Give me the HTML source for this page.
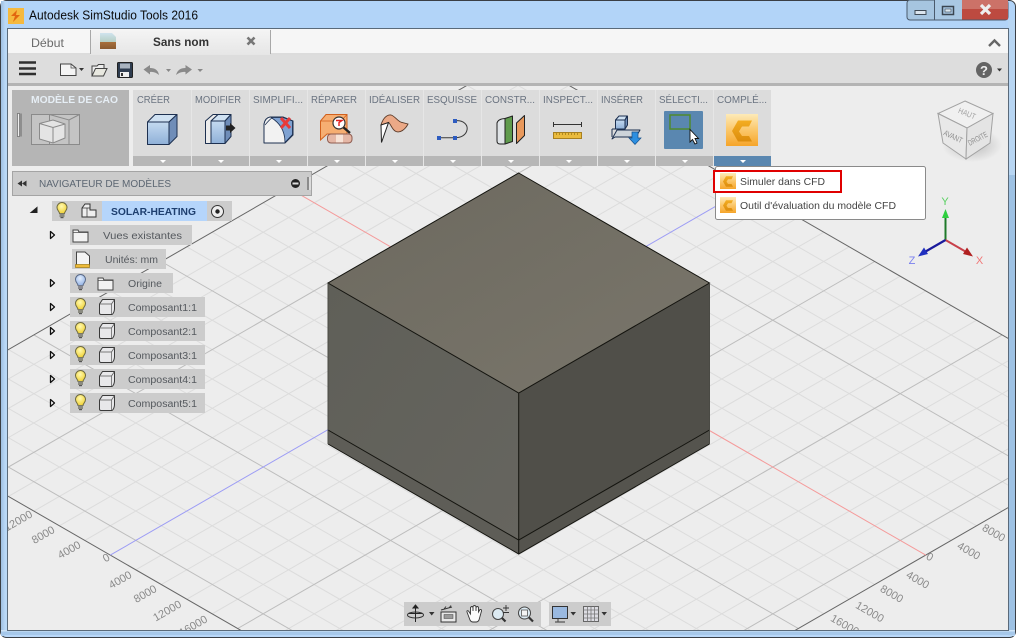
<!DOCTYPE html>
<html><head><meta charset="utf-8"><title>Autodesk SimStudio Tools 2016</title>
<style>
html,body{margin:0;padding:0;background:#fff;width:1016px;height:638px;overflow:hidden;position:relative}
svg{display:block;font-family:"Liberation Sans",sans-serif}
.l{position:absolute;left:0;top:0}
#vp{position:absolute;left:8px;top:86px;width:1000px;height:544px;overflow:hidden}
.rl{font-size:10px;fill:#6a7380}
.tr{font-size:10px;fill:#55595e}
.ax{font-size:11px;fill:#8a8a8a}
</style></head><body>
<svg class="l" width="1016" height="638" viewBox="0 0 1016 638" xmlns="http://www.w3.org/2000/svg">
<defs>
<linearGradient id="glass" x1="0" y1="0" x2="0" y2="1"><stop offset="0" stop-color="#b2d4f8"/><stop offset="1" stop-color="#b9d8f9"/></linearGradient>
<linearGradient id="glassL" x1="0" y1="0" x2="1" y2="0"><stop offset="0" stop-color="#9fc0e2"/><stop offset=".6" stop-color="#b9d8f6"/><stop offset="1" stop-color="#b9d8f6"/></linearGradient>
<linearGradient id="top" x1="0" y1="0" x2="1" y2="1"><stop offset="0" stop-color="#6c695f"/><stop offset="1" stop-color="#7a766b"/></linearGradient>
<linearGradient id="lf" x1="0" y1="0" x2="1" y2="1"><stop offset="0" stop-color="#5f5f58"/><stop offset="1" stop-color="#66655f"/></linearGradient>
<linearGradient id="bl" x1="0" y1="0" x2="0" y2="1"><stop offset="0" stop-color="#c4daf0"/><stop offset="1" stop-color="#8fb0d8"/></linearGradient>
<linearGradient id="or" x1="0" y1="0" x2="0" y2="1"><stop offset="0" stop-color="#fdeab8"/><stop offset=".5" stop-color="#fbc76a"/><stop offset="1" stop-color="#f6a52a"/></linearGradient>
<linearGradient id="cc" x1="0" y1="0" x2="0" y2="1"><stop offset="0" stop-color="#f3ad22"/><stop offset="1" stop-color="#dc8c0c"/></linearGradient>
<linearGradient id="tab" x1="0" y1="0" x2="0" y2="1"><stop offset="0" stop-color="#f4f4f4"/><stop offset="1" stop-color="#e6e6e6"/></linearGradient>
<linearGradient id="tic" x1="0" y1="0" x2="0" y2="1"><stop offset="0" stop-color="#cfe3ee"/><stop offset=".55" stop-color="#b6cfc4"/><stop offset=".56" stop-color="#a8703c"/><stop offset="1" stop-color="#8a5a30"/></linearGradient>
<radialGradient id="bulb" cx=".45" cy=".35" r=".7"><stop offset="0" stop-color="#fff9b0"/><stop offset="1" stop-color="#f0cf2c"/></radialGradient>
<radialGradient id="bulbb" cx=".45" cy=".35" r=".7"><stop offset="0" stop-color="#e4eefc"/><stop offset="1" stop-color="#8fb0e4"/></radialGradient>
<radialGradient id="sh" cx=".5" cy=".5" r=".5"><stop offset="0" stop-color="#aaa" stop-opacity=".75"/><stop offset="1" stop-color="#aaa" stop-opacity="0"/></radialGradient>

<g id="bulbY"><path d="M-2.5 3.5C-2.5 1.5 -5 .5 -5 -2.5A5 5 0 0 1 5 -2.5C5 .5 2.5 1.5 2.5 3.5Z" fill="url(#bulb)" stroke="#6e6a40"/><rect x="-2.5" y="3.5" width="5" height="3.5" fill="#8a8a80"/><rect x="-1.5" y="7" width="3" height="1.2" fill="#555"/></g>
<g id="bulbB"><path d="M-2.5 3.5C-2.5 1.5 -5 .5 -5 -2.5A5 5 0 0 1 5 -2.5C5 .5 2.5 1.5 2.5 3.5Z" fill="url(#bulbb)" stroke="#5a6a88"/><rect x="-2.5" y="3.5" width="5" height="3.5" fill="#8a8a90"/><rect x="-1.5" y="7" width="3" height="1.2" fill="#555"/></g>
<g id="comp"><path d="M-7.5 -3L-4.5 -7.5H7.5V2Q7.2 6 5 7.5H-6Q-7.5 7.5 -7.5 6Z" fill="#e8e8ea" stroke="#3a3a3a" stroke-linejoin="round"/><path d="M-7.5 -3H4.5V7M4.5 -3L7.5 -7.5" fill="none" stroke="#555" stroke-width=".7"/></g>
<g id="fold"><path d="M-7.5 -6H-2.500L-1.500 -4H7.5V6H-7.5Z" fill="#f2f2f2" stroke="#444"/><path d="M-7.5 -3.5H7.5" stroke="#444" stroke-width=".7"/></g>
<path id="exp" d="M-1.5 -3.5L2.5 0L-1.5 3.5Z" fill="#fff" stroke="#111" stroke-width="1.3" stroke-linejoin="round"/>
<g id="cfd"><rect x="0" y="0" width="16" height="16" fill="url(#or)"/><path d="M6 3.300H13L11.500 6.200H8L6.500 8.700L8 11H11.500L13 13.800H6L3 8.500Z" fill="url(#cc)"/></g>
</defs>

<!-- window frame -->
<rect width="1016" height="638" fill="#fff"/>
<rect x=".5" y=".5" width="1015" height="637" rx="6" fill="url(#glass)" stroke="#3a3f45"/>
<rect x="1" y="1" width="7" height="635" fill="url(#glassL)"/>
<rect x="1008" y="20" width="7" height="616" fill="#b8d6f3"/>
<rect x="1009" y="175" width="6" height="460" fill="#9ec2e4"/>
<rect x="1" y="631" width="1014" height="4" fill="#a6c8ea"/>
<rect x="1" y="630" width="1014" height="1.5" fill="#cfe4f7"/>
<rect x="7.5" y="28.5" width="1001" height="602" fill="#ededed" stroke="#5a6a7a"/>

<!-- title -->
<rect x="8" y="8" width="16" height="16" fill="#f5b93e"/>
<path d="M17 10L11 16H15L13 22L20 15H16Z" fill="#e2660f"/>
<text x="29" y="19.5" font-size="12.5" fill="#0b0b0b" textLength="169" lengthAdjust="spacingAndGlyphs">Autodesk SimStudio Tools 2016</text>

<!-- caption buttons -->
<rect x="907" y="0" width="101" height="20" rx="3" fill="#a6c5e0" stroke="#4a5a6c"/>
<rect x="934" y="0" width="28" height="19.5" fill="#a9c8e3"/><path d="M934.5 0V20" stroke="#4a5a6c"/>
<rect x="962" y="0" width="46" height="19.5" fill="#bd4a40"/>
<rect x="962" y="0" width="46" height="9" fill="#cc7268"/>
<rect x="915" y="10.5" width="11" height="4" fill="#dbe5ee" stroke="#3f4a55"/>
<rect x="942.5" y="6.5" width="11" height="8" fill="none" stroke="#3a4550" stroke-width="1.5"/><rect x="945" y="9" width="6" height="3" fill="#dce8f0" stroke="#3a4550" stroke-width=".6"/>
<path d="M981 5L990 14M990 5L981 14" stroke="#eee" stroke-width="3.2"/>

<!-- tabs -->
<rect x="8" y="29" width="1000" height="26" fill="#f6f6f6"/>
<rect x="8" y="53" width="1000" height="2" fill="#dcdcdc"/>
<rect x="90" y="30" width="180" height="25" fill="url(#tab)"/>
<path d="M90.5 54V30M270.5 54V30" stroke="#a8a8a8"/>
<text x="31" y="47" font-size="12" fill="#6a6a6a" textLength="33" lengthAdjust="spacingAndGlyphs">Début</text>
<path d="M100 33H112L116 37V49H100Z" fill="url(#tic)"/>
<text x="153" y="46" font-size="12" font-weight="bold" fill="#333" textLength="56" lengthAdjust="spacingAndGlyphs">Sans nom</text>
<path d="M247.5 37.5L254.5 44.5M254.5 37.5L247.5 44.5" stroke="#777" stroke-width="2.6"/>
<path d="M989 46L994.5 40.5L1000 46" fill="none" stroke="#666" stroke-width="2.4"/>

<!-- toolbar -->
<rect x="8" y="55" width="1000" height="28" fill="#dddddd"/>
<rect x="8" y="83" width="1000" height="3" fill="#b4b4b4"/>
<path d="M19 62.5H36M19 68.5H36M19 74H36" stroke="#2f2f2f" stroke-width="2.6"/>
<path d="M60.5 64H71L76 68V75.5H60.5Z" fill="#f4f4f4" stroke="#444"/><path d="M71 64V68H76" fill="none" stroke="#444" stroke-width=".7"/>
<path d="M79 68H84L81.5 71Z" fill="#333"/>
<path d="M92 76V66H97L98.5 64.5H104V68" fill="#eee" stroke="#444"/><path d="M92 76L95.5 68.5H107L103.5 76Z" fill="#e8e8e0" stroke="#444"/>
<rect x="117.5" y="62.5" width="15" height="15" rx="1" fill="#2f3d50" stroke="#222"/><rect x="120" y="63.5" width="10" height="5" fill="#aab4c0"/><rect x="120" y="72" width="9" height="5" fill="#eee"/><rect x="121" y="73" width="2" height="3" fill="#333"/>
<path d="M143.5 69.5L150 65V68C155 68 158 70 159 75C156 72.5 153 71.5 150 72V74.5Z" fill="#8a8a8a"/>
<path d="M166 69H171L168.5 72Z" fill="#888"/>
<path d="M192 69.5L185.5 65V68C180.5 68 177.5 70 176 75C179 72.5 182.5 71.5 185.5 72V74.5Z" fill="#8a8a8a"/>
<path d="M197.5 69H203L200 72Z" fill="#888"/>
<circle cx="984" cy="70" r="8" fill="#646464"/><text x="984" y="75" font-size="13" font-weight="bold" fill="#eee" text-anchor="middle">?</text>
<path d="M997 68.5H1002L999.5 71.5Z" fill="#333"/>
</svg>

<!-- viewport -->
<div id="vp">
<svg width="1000" height="544" viewBox="8 86 1000 544" xmlns="http://www.w3.org/2000/svg">
<rect x="8" y="86" width="1000" height="544" fill="#ededed"/>
<path fill="none" stroke="#dcdcdc" d="M344 631l-412 -237.400M394.800 631l-437.400 -252M445.800 631l-462.900 -266.700M496.800 631l-488.400 -281.400M598.800 631l-539.400 -310.800M649.600 631l-564.800 -325.400M700.600 631l-590.300 -340.100M751.600 631l-615.800 -354.800M823.800 613.800l-637 -367M849.200 599.200l-637 -367M874.700 584.500l-637 -367M900.200 569.800l-637 -367M951.200 540.400l-637 -367M976.600 525.800l-637 -367M1002.100 511.100l-637 -367M1027.600 496.400l-637 -367M1078.600 467l-637 -367M1104 452.400l-637 -367M1129.500 437.700l-637 -367
M692 631l412 -237.400M641.200 631l437.400 -252M590.200 631l462.900 -266.700M539.200 631l488.400 -281.400M437.200 631l539.400 -310.800M386.400 631l564.800 -325.400M335.400 631l590.300 -340.100M284.400 631l615.800 -354.800M212.200 613.800l637 -367M186.800 599.200l637 -367M161.300 584.500l637 -367M135.800 569.800l637 -367M84.800 540.400l637 -367M59.400 525.800l637 -367M33.900 511.100l637 -367M8.400 496.400l637 -367M-42.600 467l637 -367M-68 452.400l637 -367M-93.500 437.700l637 -367"/>
<path fill="none" stroke="#bdbdbd" d="M293 631l-386.500 -222.700M547.800 631l-513.900 -296.100M798.300 628.500l-637 -367M1053.100 481.700l-637 -367M743 631l386.500 -222.700M488.200 631l513.900 -296.100M237.700 628.500l637 -367M-17.100 481.700l637 -367"/>
<path fill="none" stroke="#666" d="M242 631l-361 -208M794 631l361 -208M1155 423l-637 -367M-119 423l637 -367"/>
<path d="M925.700 555.100l-637 -367" stroke="#f59a9a" fill="none"/>
<path d="M110.300 555.100l637 -367" stroke="#9c9cf5" fill="none"/>
<g class="ax">
<text transform="translate(20,524) rotate(-30)" text-anchor="middle">12000</text>
<text transform="translate(45,538) rotate(-30)" text-anchor="middle">8000</text>
<text transform="translate(71,553) rotate(-30)" text-anchor="middle">4000</text>
<text transform="translate(108,561) rotate(-30)" text-anchor="middle">0</text>
<text transform="translate(122,583) rotate(-30)" text-anchor="middle">4000</text>
<text transform="translate(147,597) rotate(-30)" text-anchor="middle">8000</text>
<text transform="translate(169,614) rotate(-30)" text-anchor="middle">12000</text>
<text transform="translate(195,629) rotate(-30)" text-anchor="middle">16000</text>
<text transform="translate(992,536) rotate(30)" text-anchor="middle">8000</text>
<text transform="translate(967,554) rotate(30)" text-anchor="middle">4000</text>
<text transform="translate(928,560) rotate(30)" text-anchor="middle">0</text>
<text transform="translate(916,583) rotate(30)" text-anchor="middle">4000</text>
<text transform="translate(890,597) rotate(30)" text-anchor="middle">8000</text>
<text transform="translate(868,615) rotate(30)" text-anchor="middle">12000</text>
<text transform="translate(843,628) rotate(30)" text-anchor="middle">16000</text>
</g>
</svg>
</div>

<svg class="l" width="1016" height="638" viewBox="0 0 1016 638" xmlns="http://www.w3.org/2000/svg">
<!-- model -->
<path d="M518.7 173L709.5 283L518.7 393L328 283Z" fill="url(#top)"/>
<path d="M328 283L518.7 393V540L328 430Z" fill="url(#lf)"/>
<path d="M518.7 393L709.5 283V430L518.7 540Z" fill="#504f49"/>
<path d="M328 430L518.7 540V554L328 444Z" fill="#5e5d57"/>
<path d="M518.7 540L709.5 430V444L518.7 554Z" fill="#55544e"/>
<path d="M518.7 173L709.5 283L518.7 393L328 283Z M518.7 393V554 M328 430L518.7 540L709.5 430 M328 444L518.7 554L709.5 444" fill="none" stroke="#14140f" stroke-width="1"/>
<path d="M328 283V444M709.5 283V444" stroke="#4a4a44" stroke-width="1"/>

<!-- ribbon -->
<rect x="12" y="90" width="117" height="76" fill="#b5b5b5"/>
<text x="31" y="103" font-size="10" font-weight="bold" fill="#e6eef5" textLength="87" lengthAdjust="spacingAndGlyphs">MODÈLE DE CAO</text>
<rect x="17.5" y="113.5" width="2" height="23" fill="#eee" stroke="#666" stroke-width=".7"/><rect x="20.5" y="113.5" width="1" height="23" fill="#666"/>
<g fill="none" stroke="#8a8a8a">
<rect x="31.5" y="114.5" width="48" height="30" fill="#c4c4c4"/>
<path d="M49.5 114.5V144.5M49.5 114.5L69 120L79.5 114.5M69 120V144.5"/>
<path d="M39.5 123.5L53 120L65 124V138L53 143L39.5 139Z" fill="#e4e4e4"/>
<path d="M39.5 123.5L53 127.5L65 124M53 127.5V143"/>
</g>

<rect x="133" y="90" width="638" height="66" fill="#dcdcdc"/>
<rect x="133" y="156" width="638" height="10" fill="#b7b7b7"/>
<rect x="714" y="156" width="57" height="10" fill="#5a87b0"/>
<path d="M191.5 90V166M249.5 90V166M307.5 90V166M365.5 90V166M423.5 90V166M481.5 90V166M539.5 90V166M597.5 90V166M655.5 90V166M713.5 90V166" stroke="#e6e6e6"/>
<path fill="#fff" d="M160 160h6l-3 3zM218 160h6l-3 3zM276 160h6l-3 3zM334 160h6l-3 3zM392 160h6l-3 3zM450 160h6l-3 3zM508 160h6l-3 3zM566 160h6l-3 3zM624 160h6l-3 3zM682 160h6l-3 3zM740 160h6l-3 3z"/>
<g class="rl">
<text x="137" y="103" textLength="33" lengthAdjust="spacingAndGlyphs">CRÉER</text>
<text x="195" y="103" textLength="46" lengthAdjust="spacingAndGlyphs">MODIFIER</text>
<text x="253" y="103" textLength="50" lengthAdjust="spacingAndGlyphs">SIMPLIFI...</text>
<text x="311" y="103" textLength="46" lengthAdjust="spacingAndGlyphs">RÉPARER</text>
<text x="369" y="103" textLength="51" lengthAdjust="spacingAndGlyphs">IDÉALISER</text>
<text x="427" y="103" textLength="50" lengthAdjust="spacingAndGlyphs">ESQUISSE</text>
<text x="485" y="103" textLength="50" lengthAdjust="spacingAndGlyphs">CONSTR...</text>
<text x="543" y="103" textLength="50" lengthAdjust="spacingAndGlyphs">INSPECT...</text>
<text x="601" y="103" textLength="42" lengthAdjust="spacingAndGlyphs">INSÉRER</text>
<text x="659" y="103" textLength="49" lengthAdjust="spacingAndGlyphs">SÉLECTI...</text>
<text x="717" y="103" textLength="50" lengthAdjust="spacingAndGlyphs">COMPLÉ...</text>
</g>

<!-- créer -->
<g stroke="#1d3050" stroke-linejoin="round">
<path d="M147.5 122L155 114.5H177L169 122Z" fill="#cfe1f2"/>
<path d="M169 122L177 114.5V136.5L169 144.5Z" fill="#6f8db8"/>
<rect x="147.5" y="122" width="21.5" height="22.5" fill="url(#bl)"/>
<!-- modifier -->
<path d="M205.5 121L213 114.5H218L211 121V143.5H205.5Z" fill="#ececec"/>
<path d="M211 121L218 114.5H231L225 121Z" fill="#cfe1f2"/>
<path d="M225 121L231 114.5V136.5L225 143.5Z" fill="#6f8db8"/>
<rect x="211" y="121" width="14" height="22.5" fill="url(#bl)"/>
</g>
<path d="M226 125.5H230V123L235.5 128L230 133V130.5H226Z" fill="#222"/>
<!-- simplifier -->
<g stroke-linejoin="round">
<path d="M270 117H283L293 121V135L285 143H264V124Q265 118 270 117Z" fill="#f2f2f2" stroke="#1d3050"/>
<path d="M271 117.5H283L292.5 121V134.5L285 142.5Q285 126 271 117.5Z" fill="#7fa2d2" stroke="#1d3050" stroke-width=".8"/>
<path d="M281 118L290 128M290 118L281 128" stroke="#e83a3a" stroke-width="3"/>
<path d="M265 125Q270 119 272 118" fill="none" stroke="#1d3050" stroke-width=".7"/>
</g>
<!-- réparer -->
<path d="M320.5 121L326 114.5H347V134H327L320.5 140Z" fill="#f6ae72" stroke="#d2601c"/>
<path d="M320.5 121H341M341 121L347 114.5" fill="none" stroke="#d2601c" stroke-width=".8"/>
<path d="M343 127L350 133" stroke="#222" stroke-width="2.4"/>
<circle cx="339" cy="123" r="6" fill="#fff" stroke="#333" stroke-width="1.2"/>
<path d="M336 120.5H342L339 122.5V126" fill="none" stroke="#e02020" stroke-width="1.4"/>
<rect x="327.5" y="134" width="24.5" height="9" rx="3.5" fill="#e5b7a6" stroke="#8e5c50"/><rect x="336" y="134.5" width="7" height="8" fill="#f7e2d6"/>
<!-- idéaliser -->
<path d="M381 125C383 118 387 114.5 391 115C395 116 398 122 402 122.5L408 124C405 130 400 133 396 131.5C392 130 391 124 388.5 122.5Z" fill="#eba987" stroke="#5a3a28" stroke-width=".9"/>
<path d="M381 125L388.5 122.5L381.5 142.5Z" fill="#fff" stroke="#222"/>
<!-- esquisse -->
<path d="M441 137.7H454M455 120.7C464 120 468 125 467 130C466 135 461 137.7 456 137.7" fill="none" stroke="#3a3a3a" stroke-width="1"/>
<rect x="453" y="119" width="4" height="4" fill="#2e5cc0"/><rect x="437" y="136" width="4" height="4" fill="#2e5cc0"/><rect x="453" y="136" width="4" height="4" fill="#2e5cc0"/>
<!-- constr -->
<g stroke="#222" stroke-linejoin="round">
<path d="M497 123Q498 119 505 118.5V144H500Q497 144 497 141Z" fill="#dfe3e6"/>
<path d="M505 118.5L512.5 116V141.5L505 144Z" fill="#5f9b4d"/>
<path d="M516.5 123L524.5 115.5V135.5L516.5 143.5Z" fill="#e9995c"/>
</g>
<!-- inspect -->
<path d="M553.5 124.5H582M553.5 122V127M581.5 122V127" stroke="#333" fill="none"/>
<rect x="553.5" y="132.5" width="28" height="6" fill="#eabb3e" stroke="#a88020"/>
<path d="M556.5 133V135M559.5 133V135M562.5 133V135M565.5 133V135M568.5 133V135M571.5 133V135M574.5 133V135M577.5 133V135" stroke="#8a6a10" stroke-width=".6"/>
<!-- insérer -->
<g stroke="#1d3050" stroke-linejoin="round">
<path d="M615.5 120L619 116H627L625 120Z" fill="#cfe1f2"/><rect x="615.5" y="120" width="9.5" height="9" fill="url(#bl)"/><path d="M625 120L627.5 116V125L625 129Z" fill="#6f8db8"/>
<path d="M612 129V137M612 129H616" fill="none"/>
<path d="M612 139L617 130H640L636 137H615Z" fill="#cdd4da"/>
</g>
<path d="M632 132H638V138H641L635 144.5L629 138H632Z" fill="#2d8fe0" stroke="#14508c" stroke-width=".7"/>
<!-- selection -->
<rect x="664" y="111" width="39" height="38" rx="1" fill="#5a87b0"/>
<rect x="670" y="115" width="20" height="14" fill="none" stroke="#4f8a2e" stroke-width="1.5"/>
<path d="M690 129.5V142L692.5 139.5L695 144L697 143L695 138.5H698.5Z" fill="#fff" stroke="#111" stroke-width=".9"/>
<!-- complement -->
<rect x="726" y="114" width="32" height="32" fill="url(#or)"/>
<path d="M738 120.5H752L749 126.5H742L739 131.500L742 136H749L752 141.500H738L732 131Z" fill="url(#cc)"/>

<!-- popup -->
<rect x="715.5" y="166.5" width="210" height="53" rx="2" fill="#fff" stroke="#8a8a8a"/>
<rect x="714" y="171" width="127" height="21" fill="#fff" stroke="#e00000" stroke-width="2"/>
<use href="#cfd" x="720" y="173"/>
<use href="#cfd" x="720" y="197"/>
<text x="740" y="185" font-size="10.5" fill="#444" textLength="85" lengthAdjust="spacingAndGlyphs">Simuler dans CFD</text>
<text x="740" y="209" font-size="10.5" fill="#444" textLength="156" lengthAdjust="spacingAndGlyphs">Outil d'évaluation du modèle CFD</text>

<!-- viewcube -->
<ellipse cx="972" cy="145" rx="30" ry="17" fill="url(#sh)"/>
<path d="M965 101L993 113.5L967 128L938 113.5Z" fill="#f0f0f0" stroke="#a2a2a2"/>
<path d="M938 113.5L967 128L966 159L943 143Z" fill="#e8e8e8" stroke="#a2a2a2"/>
<path d="M993 113.5L967 128L966 159L990 143Z" fill="#e4e4e4" stroke="#a2a2a2"/>
<text transform="translate(966,116) rotate(22)" font-size="8" fill="#a0a0a0" text-anchor="middle" textLength="18" lengthAdjust="spacingAndGlyphs">HAUT</text>
<text transform="translate(952,139) rotate(25)" font-size="8" fill="#8f8f8f" text-anchor="middle" textLength="20" lengthAdjust="spacingAndGlyphs">AVANT</text>
<text transform="translate(979,141) rotate(-28)" font-size="8" fill="#8f8f8f" text-anchor="middle" textLength="21" lengthAdjust="spacingAndGlyphs">DROITE</text>

<!-- triad -->
<path d="M945.5 240V214" stroke="#1f7a2a" stroke-width="2"/><path d="M945.5 209L949 218H942Z" fill="#2fd040"/>
<path d="M945.5 240L968 253" stroke="#c8404a" stroke-width="2"/><path d="M973 256.5L963 254L967 247.5Z" fill="#b02020"/>
<path d="M945.5 240L923 253" stroke="#1a1a9c" stroke-width="2.2"/><path d="M918 256.5L928 254L924 247.5Z" fill="#2030c0"/>
<text x="945" y="205" font-size="11" fill="#58d060" text-anchor="middle">Y</text>
<text x="979.5" y="264" font-size="11" fill="#f07878" text-anchor="middle">X</text>
<text x="912" y="264" font-size="11" fill="#7a80ee" text-anchor="middle">Z</text>

<!-- navigator header -->
<rect x="12.5" y="171.5" width="299" height="24" fill="#cbcbcb" stroke="#a4a4a4"/>
<path d="M17.5 183.5L22 180.5V186.5ZM22 183.5L26.5 180.5V186.5Z" fill="#333"/>
<text x="39" y="187" font-size="10" fill="#5c6672" textLength="132" lengthAdjust="spacingAndGlyphs">NAVIGATEUR DE MODÈLES</text>
<circle cx="295.5" cy="183.5" r="4.5" fill="#222"/><rect x="292.5" y="182.5" width="6" height="2" fill="#ddd"/>
<path d="M308 177V190" stroke="#777" stroke-width="1.5"/><path d="M310 177V190" stroke="#eee"/>

<!-- tree -->
<path d="M31 212.5L37 207.5V212.5Z" fill="#222" stroke="#222"/>
<rect x="52" y="201" width="180" height="20" fill="#cccccc"/>
<rect x="102" y="201" width="105" height="20" fill="#b5d5fb"/>
<use href="#bulbY" x="62" y="210"/>
<path d="M82 217V208L85 204H90V210H96V217Z" fill="#eee" stroke="#333"/><path d="M87 217V208H90M87 208L82 208" fill="none" stroke="#333" stroke-width=".7"/>
<text x="111" y="215" font-size="10.5" font-weight="bold" fill="#1e3f6f" textLength="85" lengthAdjust="spacingAndGlyphs">SOLAR-HEATING</text>
<circle cx="217.5" cy="211.5" r="6" fill="#eee" stroke="#333"/><circle cx="217.5" cy="211.5" r="2.2" fill="#222"/>

<use href="#exp" x="52" y="235"/>
<rect x="70" y="225" width="122" height="20" fill="#cccccc"/>
<use href="#fold" x="80.5" y="236"/>
<text x="103" y="239" class="tr" textLength="79" lengthAdjust="spacingAndGlyphs">Vues existantes</text>

<rect x="72" y="249" width="94" height="20" fill="#cccccc"/>
<path d="M76.5 252H85L89.5 256V265H76.5Z" fill="#f4f4f4" stroke="#444"/>
<rect x="75.5" y="264.5" width="14" height="3" fill="#eebb3a" stroke="#a07a10" stroke-width=".7"/>
<text x="105" y="263" class="tr" textLength="53" lengthAdjust="spacingAndGlyphs">Unités: mm</text>

<use href="#exp" x="52" y="283"/>
<rect x="70" y="273" width="103" height="20" fill="#cccccc"/>
<use href="#bulbB" x="80.5" y="282"/>
<use href="#fold" x="105.5" y="284"/>
<text x="128" y="287" class="tr" textLength="34" lengthAdjust="spacingAndGlyphs">Origine</text>

<use href="#exp" x="52" y="307"/>
<rect x="70" y="297" width="135" height="20" fill="#cccccc"/>
<use href="#bulbY" x="80.5" y="306"/>
<use href="#comp" x="107" y="307"/>
<text x="128" y="311" class="tr" textLength="69" lengthAdjust="spacingAndGlyphs">Composant1:1</text>

<use href="#exp" x="52" y="331"/>
<rect x="70" y="321" width="135" height="20" fill="#cccccc"/>
<use href="#bulbY" x="80.5" y="330"/>
<use href="#comp" x="107" y="331"/>
<text x="128" y="335" class="tr" textLength="69" lengthAdjust="spacingAndGlyphs">Composant2:1</text>

<use href="#exp" x="52" y="355"/>
<rect x="70" y="345" width="135" height="20" fill="#cccccc"/>
<use href="#bulbY" x="80.5" y="354"/>
<use href="#comp" x="107" y="355"/>
<text x="128" y="359" class="tr" textLength="69" lengthAdjust="spacingAndGlyphs">Composant3:1</text>

<use href="#exp" x="52" y="379"/>
<rect x="70" y="369" width="135" height="20" fill="#cccccc"/>
<use href="#bulbY" x="80.5" y="378"/>
<use href="#comp" x="107" y="379"/>
<text x="128" y="383" class="tr" textLength="69" lengthAdjust="spacingAndGlyphs">Composant4:1</text>

<use href="#exp" x="52" y="403"/>
<rect x="70" y="393" width="135" height="20" fill="#cccccc"/>
<use href="#bulbY" x="80.5" y="402"/>
<use href="#comp" x="107" y="403"/>
<text x="128" y="407" class="tr" textLength="69" lengthAdjust="spacingAndGlyphs">Composant5:1</text>

<!-- bottom bar -->
<rect x="404" y="602" width="137" height="24" fill="#cccccc"/>
<rect x="549" y="602" width="62" height="24" fill="#cccccc"/>
<path d="M415.5 605V622M415.5 605L413 608H418ZM409 613.5H422" stroke="#222" fill="#222"/>
<ellipse cx="415.5" cy="615" rx="8" ry="3" fill="none" stroke="#333"/>
<path d="M429 612H434.5L431.7 615.5Z" fill="#333"/>
<rect x="441" y="612" width="15" height="10" fill="#e8e8e8" stroke="#333"/><rect x="444" y="614.5" width="9" height="4" fill="#9a9a9a" stroke="#444" stroke-width=".5"/>
<path d="M441 610L452 607M444 609L446 606.5M449 608L451 605.5" stroke="#333" fill="none"/>
<path d="M470 620L467 612Q466.5 610 468.5 611L470.5 614V607.5Q472 605.5 473 607.5V611V606.5Q474.5 604.5 476 606.5V611V607.5Q477.5 605.5 478.5 607.5V612L480 609.5Q481.5 609 481.5 611L479 620Q478 622 476 622H473Q471 622 470 620Z" fill="#fafafa" stroke="#333" stroke-width=".9"/>
<circle cx="498" cy="614" r="5.5" fill="#dceaf2" stroke="#444"/><path d="M502 618L505.5 621.5" stroke="#333" stroke-width="2.2"/>
<path d="M503 608H509M506 605V611M503 612.5H509" stroke="#333" stroke-width=".9"/>
<circle cx="524.5" cy="613" r="6" fill="#dceaf2" stroke="#444"/><rect x="521.5" y="610" width="6" height="6" fill="#f4f4f4" stroke="#555" stroke-width=".8"/><path d="M529 617.5L533 621.5" stroke="#333" stroke-width="2.2"/>
<rect x="552.5" y="606.5" width="15" height="12" fill="#9ab9e0" stroke="#333"/><path d="M558 619V621.5M555 622H565" stroke="#555" stroke-width="1.2"/>
<path d="M570.5 612H576L573.2 615.5Z" fill="#333"/>
<rect x="583.5" y="606.5" width="15" height="15" fill="#dcdce2" stroke="#666"/>
<path d="M587.5 606.5V621.5M591 606.5V621.5M594.5 606.5V621.5M583.5 610H598.5M583.5 614H598.5M583.5 618H598.5" stroke="#777" stroke-width=".8"/>
<path d="M601.5 612H607L604.2 615.5Z" fill="#333"/>
</svg>
</body></html>
